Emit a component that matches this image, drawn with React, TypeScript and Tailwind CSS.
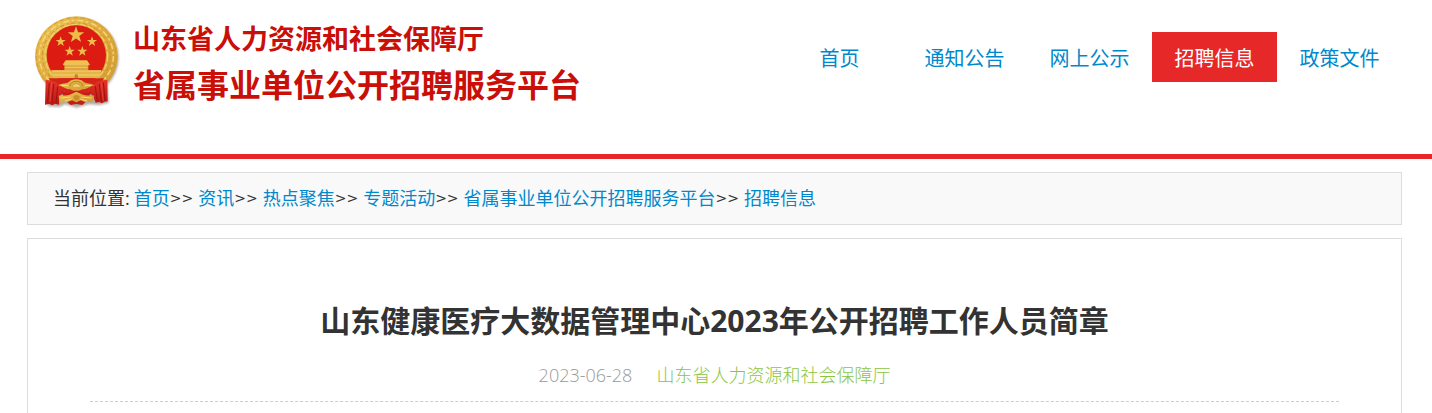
import { Fragment } from "react";

const navItems = [
  { label: "首页", active: false },
  { label: "通知公告", active: false },
  { label: "网上公示", active: false },
  { label: "招聘信息", active: true },
  { label: "政策文件", active: false },
];

const crumbs = ["首页", "资讯", "热点聚焦", "专题活动", "省属事业单位公开招聘服务平台", "招聘信息"];

const stars = [
  { x: 138, y: 78, s: 26 },
  { x: 92, y: 98, s: 16 },
  { x: 119, y: 127, s: 16 },
  { x: 157, y: 127, s: 16 },
  { x: 186, y: 98, s: 16 },
];

function Emblem() {
  return (
    <svg viewBox="9 18 270 288" className="h-24 w-[90px] shrink-0" aria-hidden="true">
      <defs>
        <linearGradient id="gold" x1="0" y1="0" x2="1" y2="1">
          <stop offset="0" stopColor="#efc658" />
          <stop offset="0.5" stopColor="#dfab3e" />
          <stop offset="1" stopColor="#d09a30" />
        </linearGradient>
        <linearGradient id="drape" x1="0" y1="0" x2="0" y2="1">
          <stop offset="0" stopColor="#e2342a" />
          <stop offset="1" stopColor="#bb1713" />
        </linearGradient>
        <filter id="shade" x="-20%" y="-20%" width="140%" height="140%">
          <feGaussianBlur stdDeviation="3.5" />
        </filter>
      </defs>

      {/* drop shadow */}
      <g fill="#7d736c" opacity="0.6" filter="url(#shade)">
        <ellipse cx="143" cy="146" rx="123" ry="119" />
        <path d="M54 220v72l34 2 18-8 34 10 36-10 32 2 28-6-4-62z" />
      </g>

      {/* wheat ring */}
      <ellipse cx="139" cy="142" rx="124" ry="120" fill="url(#gold)" />
      <g fill="none">
        <ellipse cx="139" cy="142" rx="120" ry="116" stroke="#d39c35" strokeWidth="3" strokeDasharray="14 7" />
        <ellipse cx="139" cy="141" rx="111" ry="107" stroke="#f6d97c" strokeWidth="4" strokeDasharray="18 8 7 10" />
        <ellipse cx="139" cy="140" rx="102" ry="98" stroke="#cb922c" strokeWidth="3" strokeDasharray="13 9 6 7" />
        <ellipse cx="139" cy="139" rx="94" ry="93" stroke="#f0ce69" strokeWidth="4" strokeDasharray="19 6" />
      </g>
      <ellipse cx="139" cy="139" rx="89" ry="90" fill="#dc1b12" />

      {stars.map((star) => (
        <path
          key={`${star.x}-${star.y}`}
          transform={`translate(${star.x} ${star.y}) scale(${star.s})`}
          d="M0-1 .24-.32.95-.31.38.12.59.81 0 .4-.59.81-.38.12-.95-.31-.24-.32z"
          fill="#edbd48"
        />
      ))}

      {/* gate tower */}
      <path d="M107 154h64l8 12H99z" fill="#efc250" />
      <path d="M103 166h72v18h-72z" fill="#dca63a" />
      <path d="M99 167h80M106 175h66" stroke="#f2cd65" strokeWidth="3" />
      <path d="M64 184h150l-5 24H69z" fill="#e5b548" />
      <path d="M64 186h150M69 198h140" stroke="#f4d474" strokeWidth="3" />
      <path d="M134 208v-8a5 5 0 0 1 10 0v8z" fill="#c48728" />

      {/* drapery */}
      <path d="M56 208h166l-18 32-65 18-65-18z" fill="#d3241a" />
      <path d="M47 213c14 0 28 3 38 12l22 12-8 16-9 8-3 26-12-3-8 5-9-4-13 2z" fill="url(#drape)" />
      <path d="M232 213c-14 0-30 3-39 12l-22 12 8 16 10 8 8 20 11-2 7 4 9-5 9-1z" fill="url(#drape)" />
      <path
        d="M58 222l-5 58M71 225l-5 58M83 233l-5 50M220 221l5 54M208 224l6 54M196 232l6 46"
        stroke="#a3100d"
        strokeWidth="3"
      />
      <path d="M65 221l-5 58M214 222l6 54" stroke="#ee5145" strokeWidth="2" />

      {/* gear with wheat stems */}
      <path d="M85 229c12-7 24-4 32-10 4-5 13-8 22-8s18 3 22 8c9 6 20 3 32 10-13 3-23 13-36 12-10 6-26 6-36 0-14 1-23-9-36-12z" fill="url(#gold)" />
      <path d="M120 231a19 14 0 0 1 38 0" fill="none" stroke="#b87b22" strokeWidth="3" />
      <path d="M127 233a12 9 0 0 1 24 0" fill="#f3d273" stroke="#c1862a" strokeWidth="2" />
      <path d="M95 229l20 1M164 230l19-1" stroke="#f8df8b" strokeWidth="3" />

      {/* ribbon knot */}
      <path d="M94 247c20 5 30 5 45-2 15 7 27 7 46 2l-8 16H101z" fill="#cb1b15" />
      <path d="M86 260c16-1 26 2 38-5l15-7 15 7c12 7 24 4 39 5l-7 20-22-2-12 5-13-5-13 5-14-5-23 3z" fill="url(#gold)" />
      <path d="M93 267l29-3M154 264l31 3M104 276l21-6M150 270l22 6" stroke="#f5d77c" strokeWidth="3" />
      <path d="M130 262l9-5 10 5-4 12h-11z" fill="#c98e2c" />
      <path d="M112 280l14-6 13 6 13-6 14 6-9 8-18-3-17 3z" fill="#bf2016" />
    </svg>
  );
}

export default function App() {
  return (
    <div className="bg-white font-['Open_Sans','Noto_Sans_CJK_SC',sans-serif] text-[#333]">
      <header className="flex items-start justify-between border-b-[5px] border-[#e62829] pt-[15px] pr-[30px] pb-[43px] pl-[33px]">
        <a href="#" className="flex items-start gap-2.5 font-bold whitespace-nowrap text-[#c90f08]">
          <Emblem />
          <span className="flex flex-col pt-1">
            <span className="text-[27px] leading-10">山东省人力资源和社会保障厅</span>
            <span className="text-[32px] leading-[52px]">省属事业单位公开招聘服务平台</span>
          </span>
        </a>
        <nav className="flex pt-[17px]">
          {navItems.map((item) => (
            <a
              key={item.label}
              href="#"
              className={`h-[50px] w-[125px] text-center text-xl leading-[54px] whitespace-nowrap ${
                item.active ? "bg-[#e62829] text-white" : "text-[#0088cc]"
              }`}
            >
              {item.label}
            </a>
          ))}
        </nav>
      </header>

      <main className="mt-[13px] mr-[30px] ml-[27px] flex flex-col gap-[13px]">
        <nav className="flex items-center border border-[#ddd] bg-[#f9f9f9] px-[25px] text-lg leading-[51px] whitespace-nowrap">
          <span className="mr-1">当前位置:</span>
          {crumbs.map((crumb, i) => (
            <Fragment key={crumb}>
              {i > 0 && <span className="mr-[5px] font-['DejaVu_Sans',sans-serif] text-sm leading-[51px]">&gt;&gt;</span>}
              <a href="#" className="text-[#0088cc]">
                {crumb}
              </a>
            </Fragment>
          ))}
        </nav>

        <article className="border border-b-0 border-[#ddd] px-[62px] pt-[57px] pb-3">
          <h1 className="text-center text-3xl leading-[50px] font-bold">
            山东健康医疗大数据管理中心2023年公开招聘工作人员简章
          </h1>
          <div className="flex justify-center gap-6 border-b border-dashed border-[#ccc] pt-[14px] pb-[11px] text-lg leading-[30px] font-light">
            <time className="text-[#999]">2023-06-28</time>
            <span className="text-[#8ac640]">山东省人力资源和社会保障厅</span>
          </div>
        </article>
      </main>
    </div>
  );
}
